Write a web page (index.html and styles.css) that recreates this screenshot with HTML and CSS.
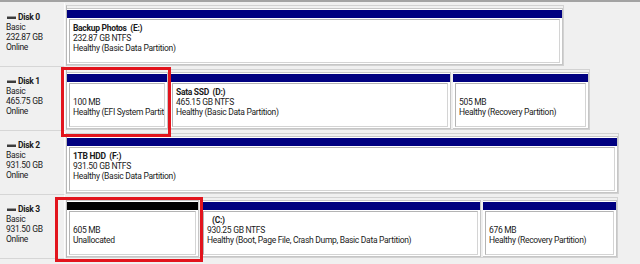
FILE: index.html
```html
<!DOCTYPE html>
<html lang="en"><head><meta charset="UTF-8">
    <meta name="viewport" content="width=device-width, initial-scale=1.0">
    <link rel="stylesheet" href="styles.css">
    <title>Disk Management</title>
</head>
<body>
    <div class="topline"></div>

    <div class="disk">
        <div class="disk-label">
            <div class="disk-name"><span class="disk-icon"></span>Disk 0</div>
            <div>Basic</div>
            <div>232.87 GB</div>
            <div>Online</div>
        </div>
        <div class="parts">
            <div class="part" style="width:496px">
                <div class="part-bar"></div>
                <div class="part-body">
                    <div class="part-name">Backup Photos&nbsp; (E:)</div>
                    <div>232.87 GB NTFS</div>
                    <div>Healthy (Basic Data Partition)</div>
                </div>
            </div>
        </div>
    </div>

    <div class="disk">
        <div class="disk-label">
            <div class="disk-name"><span class="disk-icon"></span>Disk 1</div>
            <div>Basic</div>
            <div>465.75 GB</div>
            <div>Online</div>
        </div>
        <div class="parts">
            <div class="part" style="width:101px">
                <div class="part-bar"></div>
                <div class="part-body">
                    <div class="part-name"></div>
                    <div>100 MB</div>
                    <div>Healthy (EFI System Partition)</div>
                </div>
            </div>
            <div class="part" style="width:281px">
                <div class="part-bar"></div>
                <div class="part-body">
                    <div class="part-name">Sata SSD&nbsp; (D:)</div>
                    <div>465.15 GB NTFS</div>
                    <div>Healthy (Basic Data Partition)</div>
                </div>
            </div>
            <div class="part" style="width:136px">
                <div class="part-bar"></div>
                <div class="part-body">
                    <div class="part-name"></div>
                    <div>505 MB</div>
                    <div>Healthy (Recovery Partition)</div>
                </div>
            </div>
        </div>
    </div>

    <div class="disk">
        <div class="disk-label">
            <div class="disk-name"><span class="disk-icon"></span>Disk 2</div>
            <div>Basic</div>
            <div>931.50 GB</div>
            <div>Online</div>
        </div>
        <div class="parts">
            <div class="part" style="width:551px">
                <div class="part-bar"></div>
                <div class="part-body">
                    <div class="part-name">1TB HDD&nbsp; (F:)</div>
                    <div>931.50 GB NTFS</div>
                    <div>Healthy (Basic Data Partition)</div>
                </div>
            </div>
        </div>
    </div>

    <div class="disk">
        <div class="disk-label">
            <div class="disk-name"><span class="disk-icon"></span>Disk 3</div>
            <div>Basic</div>
            <div>931.50 GB</div>
            <div>Online</div>
        </div>
        <div class="parts">
            <div class="part" style="width:132px">
                <div class="part-bar unallocated"></div>
                <div class="part-body">
                    <div class="part-name"></div>
                    <div>605 MB</div>
                    <div>Unallocated</div>
                </div>
            </div>
            <div class="part" style="width:280px">
                <div class="part-bar"></div>
                <div class="part-body">
                    <div class="part-name drive-only">(C:)</div>
                    <div>930.25 GB NTFS</div>
                    <div>Healthy (Boot, Page File, Crash Dump, Basic Data Partition)</div>
                </div>
            </div>
            <div class="part" style="width:134px">
                <div class="part-bar"></div>
                <div class="part-body">
                    <div class="part-name"></div>
                    <div>676 MB</div>
                    <div>Healthy (Recovery Partition)</div>
                </div>
            </div>
        </div>
    </div>

    <div class="mark mark-efi"></div>
    <div class="mark mark-free"></div>
</body></html>
```

FILE: styles.css
```css
body {
    margin: 0;
    position: relative;
    width: 640px;
    height: 264px;
    overflow: hidden;
    background-color: #f0f0f0;
    font-family: Roboto, "Liberation Sans", Arial, sans-serif;
    font-size: 8.5px;
    letter-spacing: -0.3px;
    line-height: 10px;
    color: #1a1a1a;
}

.topline {
    height: 2px;
    background-color: #a3a3a3;
    margin-bottom: 1px;
}

.disk {
    display: flex;
    height: 64px;
}

.disk-label {
    width: 58px;
    height: 54px;
    padding: 9px 0 0 6px;
    border-right: 1px solid #fdfdfd;
    border-bottom: 1px solid #d6d6d6;
    margin-right: 1px;
}

.disk-name {
    font-weight: bold;
    display: flex;
    align-items: center;
}

.disk-icon {
    display: inline-block;
    width: 9px;
    height: 2px;
    margin: 0 2px 0 1px;
    background-color: #3c3c3c;
    border-top: 1px solid #9a9a9a;
}

.parts {
    display: flex;
    gap: 2px;
    align-self: flex-start;
    margin-top: 2px;
    padding-top: 2px;
    border: 1px solid #d2d2d2;
    border-left-color: #b8b8b8;
    height: 57px;
}

.part {
    box-sizing: border-box;
    height: 57px;
    padding-top: 1px;
    background-color: #fff;
    border: 1px solid #c6c6c6;
    border-left: none;
}

.part-bar {
    height: 8px;
    background-color: #000080;
}

.part-bar.unallocated {
    background-color: #000;
}

.part-body {
    height: 39px;
    margin: 1px 2px 0 2px;
    padding: 3px 2px 0 3px;
    border: 1px solid #d4d4d4;
    border-top-color: #b4b4b4;
    border-left-color: #b4b4b4;
    white-space: nowrap;
    overflow: hidden;
}

.part-name {
    font-weight: bold;
    height: 10px;
}

.drive-only {
    padding-left: 5px;
}

.mark {
    position: absolute;
    border: 3px solid #e2141d;
}

.mark-efi {
    left: 61px;
    top: 67px;
    width: 104px;
    height: 64px;
}

.mark-free {
    left: 55px;
    top: 197px;
    width: 142px;
    height: 59px;
}
```
